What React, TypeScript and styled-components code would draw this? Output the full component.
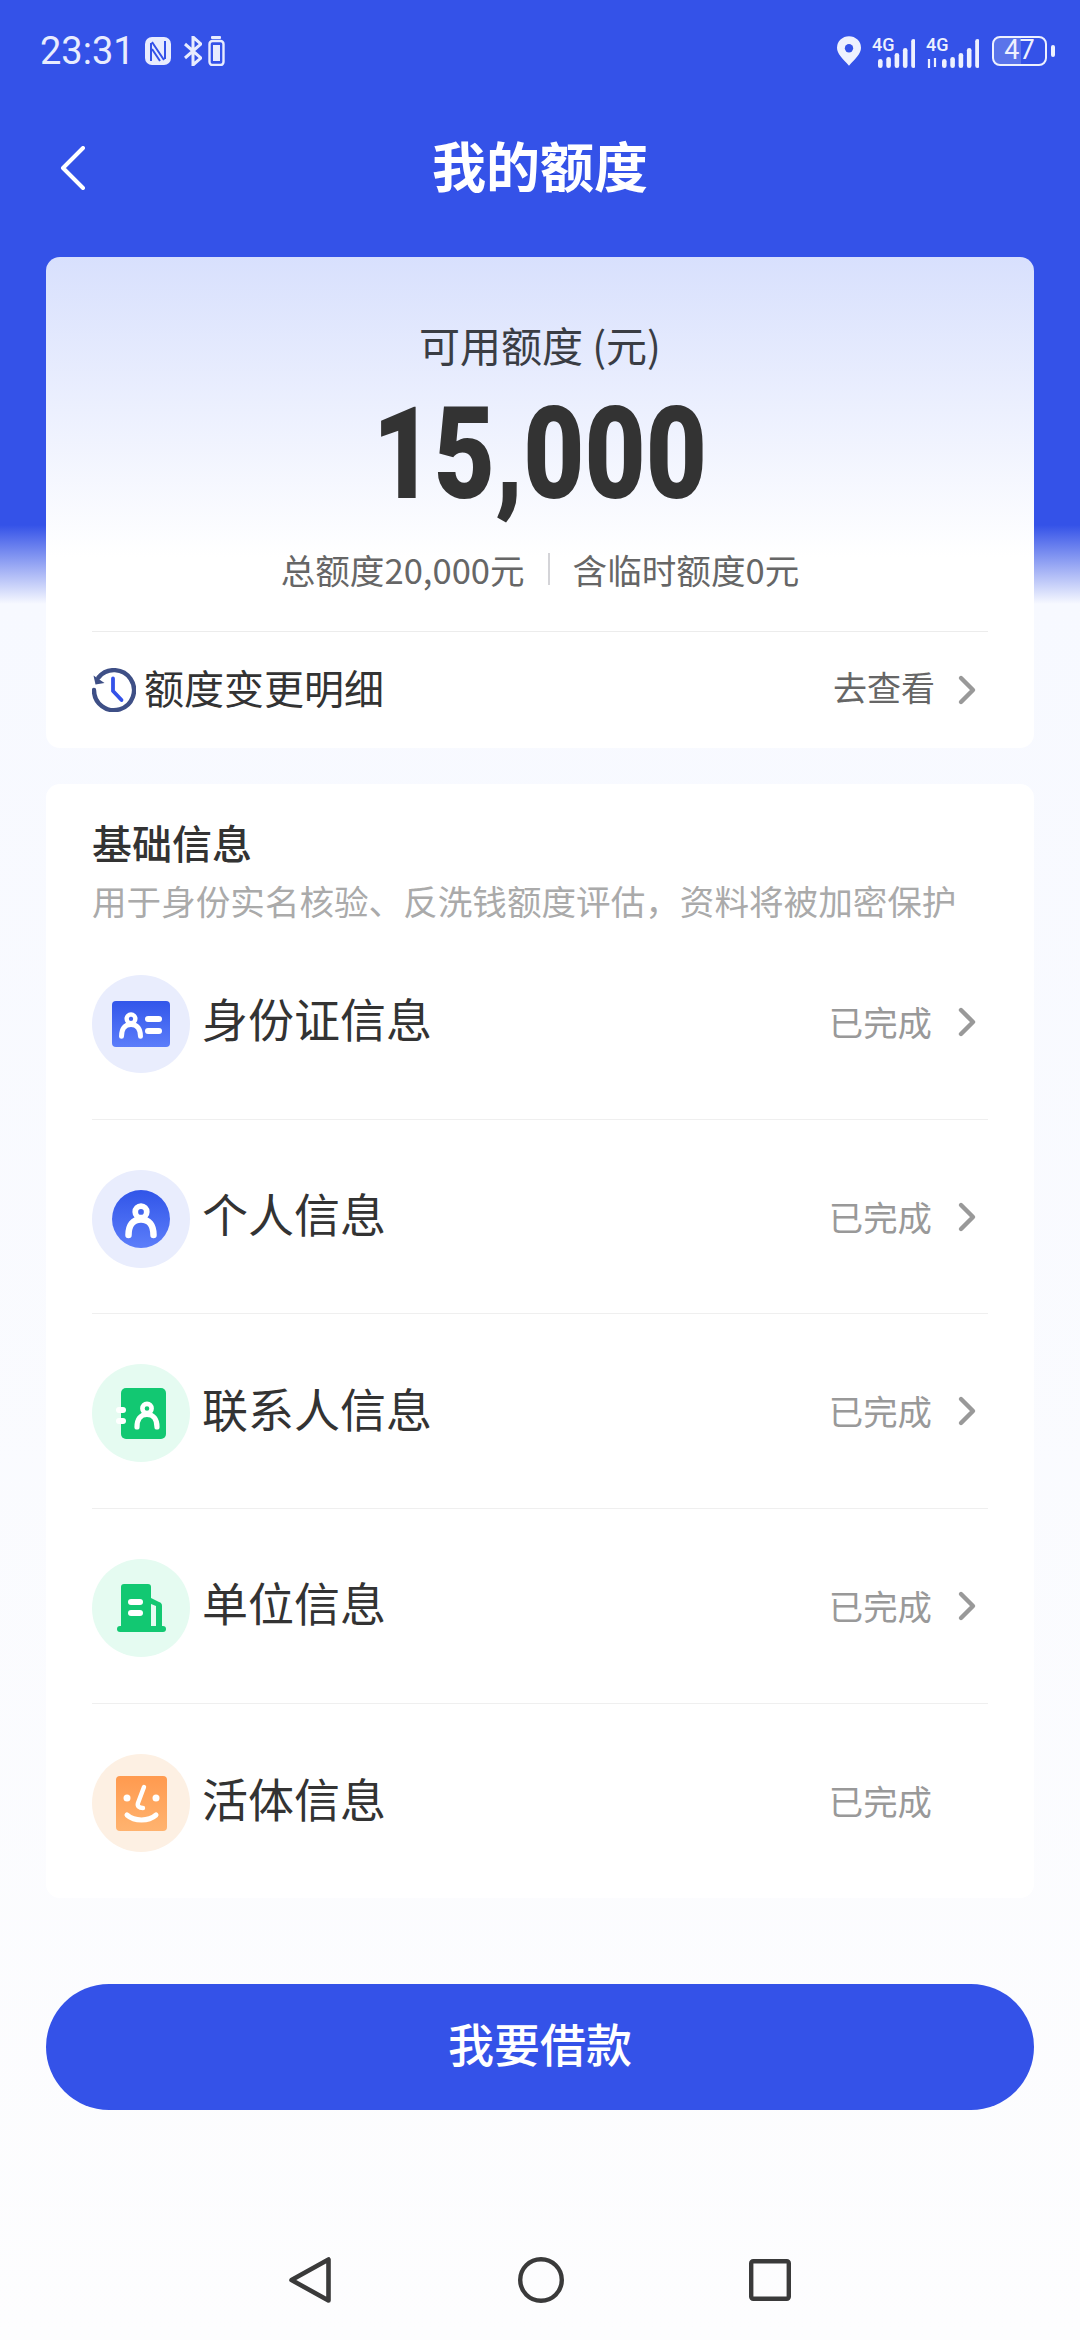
import styled, { createGlobalStyle } from "styled-components";

const GlobalStyle = createGlobalStyle`
    html, body {
        margin: 0;
        padding: 0;
    }
    * {
        box-sizing: border-box;
    }
    body {
        font-family: "Noto Sans CJK SC", "Noto Sans", sans-serif;
    }
`;

const rows = [
    { name: "身份证信息", kind: "id", link: true },
    { name: "个人信息", kind: "person", link: true },
    { name: "联系人信息", kind: "contact", link: true },
    { name: "单位信息", kind: "company", link: true },
    { name: "活体信息", kind: "face", link: false },
];

const tints: Record<string, string> = {
    id: "#e9edfd",
    person: "#e9edfd",
    contact: "#e5fbf1",
    company: "#e5fbf1",
    face: "#fdf0e3",
};

function Chevron() {
    return (
        <ChevronSvg viewBox="0 0 20 32" fill="none">
            <path d="M4 4l12 12L4 28" stroke="#999999" strokeWidth="4.4" strokeLinecap="round" strokeLinejoin="round" />
        </ChevronSvg>
    );
}

function PersonShape({ x, y, s }: { x: number; y: number; s: number }) {
    return (
        <g transform={`translate(${x} ${y}) scale(${s})`} fill="none" stroke="#fff" strokeLinecap="round">
            <circle cx="0" cy="-6.5" r="4.6" strokeWidth="4.6" />
            <path d="M-10 12c0-8 3.500-12.500 10-12.500S10 4 10 12" strokeWidth="5.200" />
        </g>
    );
}

function RowIcon({ kind }: { kind: string }) {
    if (kind === "id") {
        return (
            <svg width="58" height="46" viewBox="0 0 58 46">
                <defs>
                    <linearGradient id="idFill" x1="0" y1="0" x2="0" y2="1">
                        <stop offset="0" stopColor="#3256ea" />
                        <stop offset="1" stopColor="#5b7dfa" />
                    </linearGradient>
                </defs>
                <rect width="58" height="46" rx="4" fill="url(#idFill)" />
                <PersonShape x={19} y={24} s={0.95} />
                <rect x="33" y="15" width="17" height="6" rx="3" fill="#fff" />
                <rect x="33" y="27" width="17" height="6" rx="3" fill="#fff" />
            </svg>
        );
    }
    if (kind === "person") {
        return (
            <svg width="58" height="58" viewBox="0 0 58 58">
                <defs>
                    <linearGradient id="personFill" x1="0" y1="0" x2="0" y2="1">
                        <stop offset="0" stopColor="#3155e8" />
                        <stop offset="1" stopColor="#5c7efa" />
                    </linearGradient>
                </defs>
                <circle cx="29" cy="29" r="29" fill="url(#personFill)" />
                <PersonShape x={29} y={30} s={1.25} />
            </svg>
        );
    }
    if (kind === "contact") {
        return (
            <svg width="50" height="51" viewBox="0 0 50 51">
                <rect x="5" y="0" width="45" height="51" rx="5" fill="#12c872" />
                <rect x="0" y="19" width="10" height="6" rx="3" fill="#fff" />
                <rect x="0" y="30" width="10" height="6" rx="3" fill="#fff" />
                <PersonShape x={31} y={27} s={1} />
            </svg>
        );
    }
    if (kind === "company") {
        return (
            <svg width="49" height="48" viewBox="0 0 49 48">
                <path d="M4 3a3 3 0 0 1 3-3h24a3 3 0 0 1 3 3v41H4z" fill="#12c872" />
                <path d="M34 14l8 4a4 4 0 0 1 3 4v22h-6V22l-5-2z" fill="#12c872" />
                <rect x="0" y="42" width="49" height="6" rx="3" fill="#12c872" />
                <rect x="11" y="15" width="15" height="6" rx="3" fill="#fff" />
                <rect x="11" y="26" width="15" height="6" rx="3" fill="#fff" />
            </svg>
        );
    }
    return (
        <svg width="51" height="55" viewBox="0 0 51 55">
            <defs>
                <linearGradient id="faceFill" x1="0" y1="0" x2="0" y2="1">
                    <stop offset="0" stopColor="#ff9a4f" />
                    <stop offset="1" stopColor="#ffb36f" />
                </linearGradient>
            </defs>
            <rect width="51" height="55" rx="4" fill="url(#faceFill)" />
            <circle cx="11" cy="22" r="3.500" fill="#fff" />
            <circle cx="40" cy="22" r="3.500" fill="#fff" />
            <path d="M28 11l-6 16c-1 3 1 5 5 5" fill="none" stroke="#fff" strokeWidth="4.4" strokeLinecap="round" />
            <path d="M11 39c4 3.500 9 5 14.500 5s10.500-1.500 14.500-5" fill="none" stroke="#fff" strokeWidth="5" strokeLinecap="round" />
        </svg>
    );
}

const signalBars = [9, 11, 15, 20, 29];

function Signal({ label, arrows }: { label: string; arrows?: boolean }) {
    const width = arrows ? 53 : 43;
    const startX = arrows ? 16 : 6;
    return (
        <svg width={width} height="36" viewBox={`0 -5 ${width} 36`}>
            <SignalLabel x="0" y="13">{label}</SignalLabel>
            {arrows && <path d="M3 21v9M9 20v9" stroke="#eef1fe" strokeWidth="2.2" />}
            {signalBars.map((h, i) => (
                <rect key={i} x={startX + i * 8.3} y={30 - h} width="4.6" height={h} rx="2.3" fill="#eef1fe" />
            ))}
        </svg>
    );
}

export default function App() {
    return (
        <Page>
            <GlobalStyle />
            <StatusBar>
                <StatusLeft>
                    <Clock>23:31</Clock>
                    <svg width="26" height="28" viewBox="0 0 26 28">
                        <rect width="26" height="28" rx="7" fill="#e8ecfe" />
                        <path d="M6 24V6M20 22V4M7 5l12 18M7 12l8 12" fill="none" stroke="#3452e8" strokeWidth="2" />
                    </svg>
                    <svg width="25" height="30" viewBox="0 0 25 30" fill="none">
                        <path d="M8 8l16 14-8 7V1l8 7L8 22" stroke="#e8ecfe" strokeWidth="3" />
                    </svg>
                    <svg width="17" height="30" viewBox="0 0 17 30" fill="none">
                        <rect x="3" y="0" width="10" height="3" rx="1" fill="#e8ecfe" />
                        <rect x="1.500" y="5" width="14" height="24" rx="3" stroke="#e8ecfe" strokeWidth="2.400" />
                        <rect x="5" y="9" width="7" height="16" fill="#e8ecfe" />
                    </svg>
                </StatusLeft>
                <StatusRight>
                    <svg width="24" height="30" viewBox="0 0 26 32">
                        <path d="M13 32C6 24 0 19 0 12.500a13 12.500 0 0 1 26 0C26 19 20 24 13 32z" fill="#eef1fe" />
                        <circle cx="13" cy="13" r="4.500" fill="#3452e8" />
                    </svg>
                    <Signal label="4G" />
                    <Signal label="4G" arrows />
                    <Battery>47</Battery>
                    <BatteryTip />
                </StatusRight>
            </StatusBar>

            <Header>
                <BackButton viewBox="0 0 26 44" fill="none">
                    <path d="M23 2L3 22l20 20" stroke="#fff" strokeWidth="4" strokeLinecap="round" strokeLinejoin="round" />
                </BackButton>
                <Title>我的额度</Title>
            </Header>

            <QuotaCard>
                <QuotaHero>
                    <QuotaLabel>可用额度 (元)</QuotaLabel>
                    <QuotaAmount>15,000</QuotaAmount>
                    <QuotaSummary>
                        <span>总额度20,000元</span>
                        <SummaryBar />
                        <span>含临时额度0元</span>
                    </QuotaSummary>
                </QuotaHero>
                <DetailRow>
                    <DetailTitle>
                        <svg width="44" height="44" viewBox="0 0 44 44" fill="none">
                            <path d="M6.500 9.500A20 20 0 1 1 2 22" stroke="#3e4f86" strokeWidth="4.400" strokeLinecap="round" />
                            <path d="M1.500 7.500l2 9 9-1.500z" fill="#3e4f86" />
                            <path d="M21 10.500V23l8.500 9" stroke="#3452e8" strokeWidth="3.800" strokeLinecap="round" strokeLinejoin="round" />
                        </svg>
                        <DetailText>额度变更明细</DetailText>
                    </DetailTitle>
                    <RowRight>
                        <GoText>去查看</GoText>
                        <Chevron />
                    </RowRight>
                </DetailRow>
            </QuotaCard>

            <InfoCard>
                <InfoHead>
                    <InfoTitle>基础信息</InfoTitle>
                    <InfoDesc>用于身份实名核验、反洗钱额度评估，资料将被加密保护</InfoDesc>
                </InfoHead>
                {rows.map((row, i) => (
                    <InfoRow key={row.name} $last={i === rows.length - 1}>
                        <IconCircle $tint={tints[row.kind]}>
                            <RowIcon kind={row.kind} />
                        </IconCircle>
                        <RowName>{row.name}</RowName>
                        <RowRight>
                            <DoneText>已完成</DoneText>
                            {row.link ? <Chevron /> : <ChevronSpace />}
                        </RowRight>
                    </InfoRow>
                ))}
            </InfoCard>

            <BorrowButton>我要借款</BorrowButton>

            <NavBar>
                <svg width="44" height="48" viewBox="0 0 44 48" fill="none">
                    <path d="M39.500 3.500v41L2.500 24z" stroke="#3a3a3a" strokeWidth="4.600" strokeLinejoin="round" />
                </svg>
                <svg width="46" height="46" viewBox="0 0 46 46" fill="none">
                    <circle cx="23" cy="23" r="20.800" stroke="#3a3a3a" strokeWidth="4.400" />
                </svg>
                <svg width="42" height="42" viewBox="0 0 42 42" fill="none">
                    <rect x="2.200" y="2.200" width="37.600" height="37.600" rx="2" stroke="#3a3a3a" strokeWidth="4.400" />
                </svg>
            </NavBar>
        </Page>
    );
}

const Page = styled.div`
    width: 1080px;
    height: 2340px;
    display: flex;
    flex-direction: column;
    overflow: hidden;
    background: linear-gradient(#3452e8 0, #3452e8 525px, #f7f9ff 604px, #fdfdfe 2340px);
`;

const StatusBar = styled.div`
    height: 100px;
    padding: 2px 25px 0 40px;
    display: flex;
    align-items: center;
    justify-content: space-between;
`;

const StatusLeft = styled.div`
    display: flex;
    align-items: center;
    gap: 6px;
`;

const StatusRight = styled.div`
    display: flex;
    align-items: center;
    gap: 11px;
`;

const Clock = styled.span`
    font-family: "Roboto", sans-serif;
    font-size: 38px;
    color: #e8ecfe;
    margin-right: 4px;
`;

const SignalLabel = styled.text`
    font-family: "Roboto", sans-serif;
    font-size: 18px;
    font-weight: 500;
    fill: #eef1fe;
`;

const Battery = styled.div`
    width: 55px;
    height: 30px;
    margin-left: 2px;
    border: 2.500px solid #eef1fe;
    border-radius: 8px;
    background: linear-gradient(90deg, #5a74ea 52%, transparent 52%);
    font-family: "Roboto", sans-serif;
    font-size: 27px;
    line-height: 25px;
    text-align: center;
    color: #eef1fe;
`;

const BatteryTip = styled.div`
    width: 4px;
    height: 12px;
    margin-left: -7px;
    border-radius: 2px;
    background: #eef1fe;
`;

const Header = styled.div`
    position: relative;
    height: 136px;
    display: flex;
    align-items: center;
    justify-content: center;
`;

const BackButton = styled.svg`
    position: absolute;
    left: 60px;
    top: 46px;
    width: 26px;
    height: 44px;
`;

const Title = styled.h1`
    margin: 0 0 6px;
    font-size: 54px;
    line-height: 70px;
    font-weight: 700;
    color: #fff;
`;

const QuotaCard = styled.div`
    margin: 21px 46px 0;
    height: 491px;
    border-radius: 14px;
    background: linear-gradient(#d8e0fd, #ffffff 300px);
    padding: 0 46px;
`;

const QuotaHero = styled.div`
    height: 375px;
    border-bottom: 1px solid #ececec;
    display: flex;
    flex-direction: column;
    align-items: center;
`;

const QuotaLabel = styled.div`
    margin-top: 62px;
    font-size: 41px;
    line-height: 50px;
    color: #3a3d44;
`;

const QuotaAmount = styled.div`
    margin-top: 21px;
    font-family: "Roboto", sans-serif;
    font-size: 128px;
    line-height: 128px;
    font-weight: 900;
    color: #333333;
    transform: scaleX(0.825);
`;

const QuotaSummary = styled.div`
    margin-top: 28px;
    display: flex;
    align-items: center;
    font-size: 34.600px;
    line-height: 46px;
    color: #666666;
`;

const SummaryBar = styled.div`
    width: 2px;
    height: 32px;
    margin: 0 23px;
    background: #d4d4d8;
`;

const DetailRow = styled.div`
    height: 116px;
    display: flex;
    align-items: center;
    justify-content: space-between;
`;

const DetailTitle = styled.div`
    display: flex;
    align-items: center;
    gap: 8px;
`;

const DetailText = styled.span`
    margin-bottom: 6px;
    font-size: 40px;
    line-height: 50px;
    color: #333333;
`;

const RowRight = styled.div`
    display: flex;
    align-items: center;
    gap: 25px;
    margin-right: 11px;
`;

const GoText = styled.span`
    margin: 0 -3px 8px 0;
    font-size: 34px;
    color: #666666;
`;

const DoneText = styled.span`
    margin-bottom: 2px;
    font-size: 34.400px;
    color: #999999;
`;

const ChevronSvg = styled.svg`
    width: 20px;
    height: 32px;
`;

const ChevronSpace = styled.div`
    width: 20px;
`;

const InfoCard = styled.div`
    margin: 36px 46px 0;
    height: 1114px;
    border-radius: 14px;
    background: #ffffff;
    padding: 0 46px;
`;

const InfoHead = styled.div`
    height: 141px;
    padding-top: 33px;
`;

const InfoTitle = styled.div`
    font-size: 40px;
    line-height: 50px;
    font-weight: 500;
    color: #333333;
`;

const InfoDesc = styled.div`
    margin-top: 8px;
    font-size: 34.600px;
    line-height: 50px;
    color: #aaaaaa;
    white-space: nowrap;
`;

const InfoRow = styled.div<{ $last: boolean }>`
    height: 194.700px;
    display: flex;
    align-items: center;
    gap: 12px;
    border-bottom: ${(p) => (p.$last ? "none" : "1px solid #efefef")};
`;

const IconCircle = styled.div<{ $tint: string }>`
    width: 98px;
    height: 98px;
    margin-top: 4px;
    border-radius: 50%;
    background: ${(p) => p.$tint};
    display: flex;
    align-items: center;
    justify-content: center;
`;

const RowName = styled.div`
    flex: 1;
    margin-bottom: 9px;
    font-size: 46px;
    line-height: 60px;
    color: #333333;
`;

const BorrowButton = styled.button`
    margin: 86px 46px 0;
    height: 126px;
    padding: 0 0 10px;
    border: none;
    border-radius: 63px;
    background: #3452e8;
    font-family: inherit;
    font-size: 46px;
    font-weight: 500;
    color: #ffffff;
`;

const NavBar = styled.div`
    margin-top: auto;
    height: 120px;
    padding: 0 289px;
    display: flex;
    align-items: center;
    justify-content: space-between;
`;
